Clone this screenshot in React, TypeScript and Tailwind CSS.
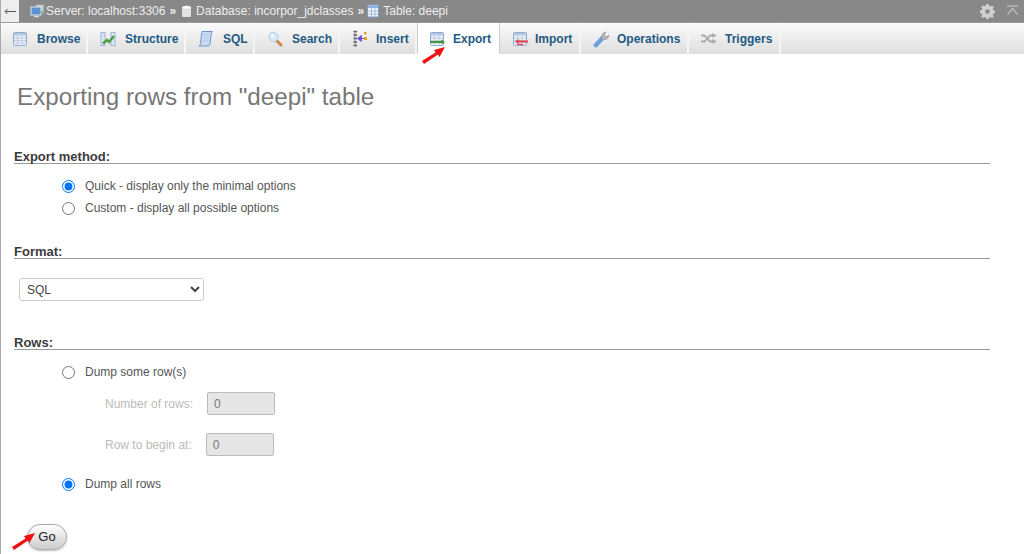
import React from 'react';

function TableIcon({ bar }: { bar?: string }) {
  return (
    <svg width="16" height="16" viewBox="0 0 16 16" className="shrink-0">
      <rect x="1.5" y="1.5" width="13" height="13" rx="1" fill="#eef3fa" stroke="#8fa9cf" />
      <rect x="2" y="2" width="12" height="2.500" fill="#b4c8e4" />
      <path d="M2 7h12M2 9.500h12M2 12h12M5.500 4.500v10M10 4.500v10" stroke="#bccbe0" strokeWidth="1" fill="none" />
      {bar === 'export' && (
        <>
          <rect x="1" y="10" width="12" height="2" fill="#3f9a3a" />
          <path d="M12.500 8.500l3.500 2.500-3.500 2.500z" fill="#3f9a3a" />
        </>
      )}
      {bar === 'import' && (
        <>
          <rect x="5" y="9.500" width="11" height="2" fill="#e8434a" />
          <path d="M6.500 8l-3.500 2.500 3.500 2.500z" fill="#e8434a" />
          <path d="M5 13.500h6" stroke="#e8434a" strokeWidth="1" />
        </>
      )}
    </svg>
  );
}

function StructureIcon() {
  return (
    <svg width="16" height="16" viewBox="0 0 16 16" className="shrink-0">
      <rect x="1" y="1.500" width="4" height="13" fill="#dbe6f4" stroke="#9db4d4" />
      <rect x="11" y="1.500" width="4" height="13" fill="#dbe6f4" stroke="#9db4d4" />
      <path d="M3 12.500L7 9l2 2 5-6" stroke="#4a9e42" strokeWidth="2.400" fill="none" />
    </svg>
  );
}

function SqlIcon() {
  return (
    <svg width="16" height="17" viewBox="0 0 16 17" className="shrink-0">
      <path d="M4 1.500h10.500c-1 1-1.200 2-1.400 3.500L12 14.500c-.2 1-1 1.500-2 1.500H1c1-.5 1.300-1.300 1.500-2.500l1-9.500C3.600 2.500 3.800 2 4 1.500z" fill="#c8daf2" stroke="#6f96c8" />
      <path d="M5.500 5h5.500M5 8h5.500M4.700 11h5.500" stroke="#aec6e6" strokeWidth="1" />
    </svg>
  );
}

function SearchIcon() {
  return (
    <svg width="16" height="16" viewBox="0 0 16 16" className="shrink-0">
      <path d="M9.500 9.500l4.500 4.500" stroke="#c98a52" strokeWidth="3" strokeLinecap="round" />
      <circle cx="6.500" cy="6" r="4.700" fill="#d6e6f6" stroke="#bccde0" />
      <circle cx="5.500" cy="4.700" r="1.500" fill="#ffffff" />
    </svg>
  );
}

function InsertIcon() {
  return (
    <svg width="16" height="17" viewBox="0 0 16 17" className="shrink-0">
      <path d="M1.500 1.500h3.500M1.500 5h3.500M1.500 8.500h3.500M1.500 12h3.500M1.500 15.500h3.500" stroke="#555" strokeWidth="1.500" />
      <path d="M3 1v15" stroke="#888" strokeWidth="1" />
      <path d="M7 8.500h5M9.500 5.500l-4 3 4 3z" fill="#6b52d6" stroke="#6b52d6" />
      <rect x="12" y="2" width="2.500" height="2.500" fill="#e0a020" />
      <rect x="12" y="7" width="3" height="3" fill="#e0a020" />
    </svg>
  );
}

function WrenchIcon() {
  return (
    <svg width="17" height="18" viewBox="0 0 17 18" className="shrink-0">
      <path d="M2.800 15.200L9.500 8" stroke="#6f9fe0" strokeWidth="4.500" strokeLinecap="round" />
      <path d="M9 8.500c-1-2.500.5-6 3.500-6.500l.5.300-2 2.700 2 2 2.600-1.700.2.500c-.3 2.800-3.500 4.700-6 3.500z" fill="#b8b8b8" stroke="#8e8e8e" strokeWidth=".7" />
    </svg>
  );
}

function TriggersIcon() {
  return (
    <svg width="16" height="12" viewBox="0 0 16 12" className="shrink-0">
      <path d="M0 2.500h3.500l5.500 6h3M0 8.500h3.500l5.500-6h3" stroke="#a8a8a8" strokeWidth="1.800" fill="none" />
      <path d="M11.500 0l4 2.500-4 2.500zM11.500 6l4 2.500-4 2.500z" fill="#a8a8a8" />
    </svg>
  );
}

const tabs = [
  { label: 'Browse', w: 'w-[88px] gap-[9px]', icon: <TableIcon /> },
  { label: 'Structure', w: 'w-[98px] gap-[9px]', icon: <StructureIcon /> },
  { label: 'SQL', w: 'w-[69px] gap-[9px]', icon: <SqlIcon /> },
  { label: 'Search', w: 'w-[85px] gap-[9px]', icon: <SearchIcon /> },
  { label: 'Insert', w: 'w-[77px] gap-[8px]', icon: <InsertIcon /> },
  { label: 'Export', w: 'w-[83px] gap-[8px]', icon: <TableIcon bar="export" />, active: true },
  { label: 'Import', w: 'w-[81px] gap-[7px]', icon: <TableIcon bar="import" /> },
  { label: 'Operations', w: 'w-[108px] gap-[8px]', icon: <WrenchIcon /> },
  { label: 'Triggers', w: 'w-[92px] gap-[8px]', icon: <TriggersIcon /> },
];

function Heading({ children }: { children: React.ReactNode }) {
  return (
    <div className="ml-[13px] w-[976px] border-b border-[#999] pt-[2px] text-[13px] leading-[13px] font-bold text-[#3c3c3c]">
      {children}
    </div>
  );
}

function Radio({ label, checked, name }: { label: string; checked?: boolean; name: string }) {
  return (
    <label className="flex items-center h-[22px] pl-[61px] text-[12px] text-[#555]">
      <input type="radio" name={name} defaultChecked={checked} className="m-0 mr-[10px] w-[13px] h-[13px]" />
      {label}
    </label>
  );
}

function DisabledField({ label }: { label: string }) {
  return (
    <div className="flex items-center h-[23px] pl-[104px] text-[12px] text-[#bbb]">
      <span>{label}</span>
      <input
        disabled
        defaultValue="0"
        className="ml-[14px] h-[23px] w-[68px] border border-[#bbb] rounded-[2px] bg-[#e6e6e6] px-[6px] text-[12px] text-[#777]"
      />
    </div>
  );
}

function RedArrow({ className }: { className: string }) {
  return (
    <svg width="24" height="18" viewBox="0 0 24 18" className={`absolute ${className}`}>
      <path d="M0 15L13.500 6.500 12 4 23 1l-5.500 10-1.500-2.500L2 18z" fill="#ee1111" />
    </svg>
  );
}

export default function App() {
  return (
    <div className="relative h-[554px] w-[1024px] overflow-hidden bg-white border-l border-[#aaa] font-['Liberation_Sans',Arial,sans-serif]">
      {/* top breadcrumb bar */}
      <div className="flex items-center h-[23px] -ml-px bg-[#888] border-b border-[#9a9a9a] text-[12px] text-[#eee]">
        <div className="flex items-center justify-center w-[19px] h-[22px] bg-[#eee]">
          <svg width="12" height="7" viewBox="0 0 12 7">
            <path d="M12 3.500H1M3.500 1L1 3.500 3.500 6" stroke="#555" fill="none" />
          </svg>
        </div>
        <div className="flex items-center ml-[11px]">
          <svg width="15" height="14" viewBox="0 0 15 14" className="mr-px">
            <rect x="6" y="0.500" width="8" height="9" fill="#c9c9c9" stroke="#9a9a9a" />
            <rect x="1" y="3" width="10" height="8" fill="#5e8fd0" stroke="#dbe6f4" />
            <path d="M4 12.500h5" stroke="#ddd" strokeWidth="1.500" />
            <rect x="11" y="7" width="2" height="2" fill="#6ac050" />
          </svg>
          <span>Server: localhost:3306</span>
          <span className="ml-[4px] font-bold">»</span>
          <svg width="11" height="13" viewBox="0 0 11 13" className="ml-[5px] mr-[4px]">
            <rect x="1" y="2" width="9" height="10" rx="1" fill="#e2e2e2" />
            <ellipse cx="5.500" cy="2.500" rx="4.500" ry="1.800" fill="#ffffff" stroke="#bbb" strokeWidth=".5" />
          </svg>
          <span>Database: incorpor_jdclasses</span>
          <span className="ml-[4px] font-bold">»</span>
          <svg width="13" height="14" viewBox="0 0 13 14" className="ml-[3px] mr-[3px]">
            <rect x="0.500" y="1" width="11" height="12" fill="#eef3fa" stroke="#7f9cc4" />
            <rect x="1" y="1.500" width="10" height="2.500" fill="#8fb0dc" />
            <path d="M1 7h10M1 10h10M4.500 4v9M8 4v9" stroke="#a8bcd8" />
          </svg>
          <span>Table: deepi</span>
        </div>
        <div className="flex items-center ml-auto mr-[5px] gap-[11px]">
          <svg width="15" height="15" viewBox="0 0 15 15">
            <path
              d="M6.300 0h2.400l.4 2 1.300.6 1.700-1.100 1.700 1.700-1.100 1.700.6 1.300 2 .4v2.400l-2 .4-.6 1.300 1.100 1.700-1.700 1.700-1.700-1.100-1.300.6-.4 2H6.300l-.4-2-1.300-.6-1.700 1.100-1.700-1.700 1.100-1.700-.6-1.300-2-.4V6.300l2-.4.6-1.300-1.100-1.700 1.700-1.700 1.700 1.100 1.300-.6z"
              fill="#d0d0d0"
            />
            <circle cx="7.500" cy="7.500" r="2.300" fill="#888" />
          </svg>
          <svg width="13" height="12" viewBox="0 0 13 12">
            <path d="M1 1h11M1.500 9.500l5-6 5 6" stroke="#b8b8b8" strokeWidth="1.500" fill="none" />
          </svg>
        </div>
      </div>

      {/* tabs */}
      <div className="flex h-[31px] -ml-px bg-gradient-to-b from-[#fbfbfb] to-[#dedede]">
        {tabs.map((t) => (
          <div
            key={t.label}
            className={`flex items-center h-[31px] ${t.w} text-[12px] font-bold text-[#235a81] ${
              t.active ? 'pl-[11px] bg-white border-x border-[#ccc]' : 'pl-[12px] border-r-2 border-[#f5f5f5]'
            }`}
          >
            <span className="flex w-[16px] justify-center shrink-0">{t.icon}</span>
            <span>{t.label}</span>
          </div>
        ))}
      </div>

      <h1 className="mt-[29px] ml-[16px] text-[24.2px] leading-[28px] font-normal text-[#777]">
        Exporting rows from "deepi" table
      </h1>

      <div className="mt-[37px]">
        <Heading>Export method:</Heading>
        <div className="mt-[11px]">
          <Radio name="method" label="Quick - display only the minimal options" checked />
          <Radio name="method" label="Custom - display all possible options" />
        </div>
      </div>

      <div className="mt-[24px]">
        <Heading>Format:</Heading>
        <select className="block mt-[19px] ml-[18px] h-[23px] w-[185px] border border-[#ccc] rounded-[3px] bg-white pl-[3px] text-[12px] text-[#444]">
          <option>SQL</option>
        </select>
      </div>

      <div className="mt-[33px]">
        <Heading>Rows:</Heading>
        <div className="mt-[11px]">
          <Radio name="rows" label="Dump some row(s)" />
        </div>
        <div className="mt-[9px]">
          <DisabledField label="Number of rows:" />
        </div>
        <div className="mt-[18px]">
          <DisabledField label="Row to begin at:" />
        </div>
        <div className="mt-[17px]">
          <Radio name="rows" label="Dump all rows" checked />
        </div>
      </div>

      <button className="block mt-[29px] ml-[26px] w-[40px] h-[26px] rounded-full border border-[#aaa] bg-gradient-to-b from-white to-[#ccc] text-[13px] text-[#222] shadow-[0_1px_2px_rgba(0,0,0,0.25)]">
        Go
      </button>

      <RedArrow className="left-[421px] top-[46px]" />
      <RedArrow className="left-[11px] top-[532px]" />
    </div>
  );
}
